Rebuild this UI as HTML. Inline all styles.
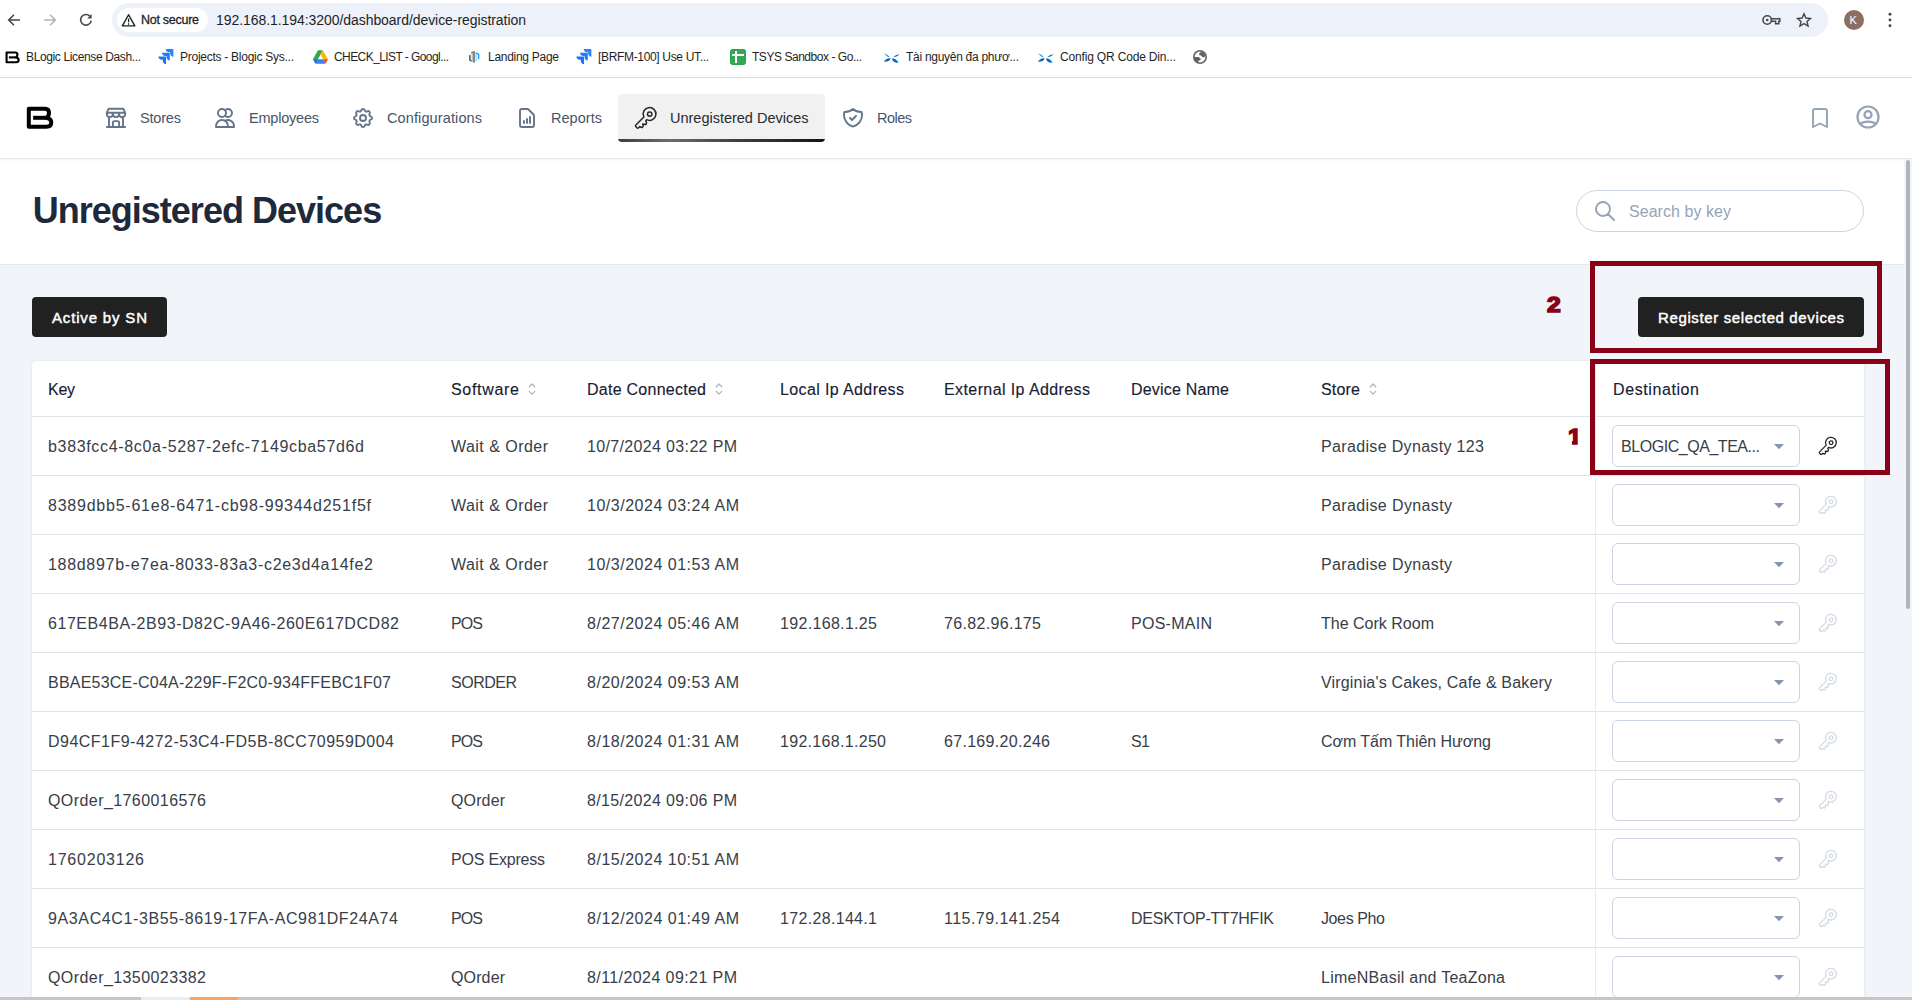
<!DOCTYPE html>
<html lang="en"><head><meta charset="utf-8"><title>Unregistered Devices</title>
<style>
*{box-sizing:border-box;margin:0;padding:0}
html,body{width:1912px;height:1000px;overflow:hidden;background:#fff}
body{position:relative;font-family:"Liberation Sans",sans-serif}
.t{position:absolute;white-space:nowrap;display:block}
.a{position:absolute;display:block}
svg{position:absolute;overflow:visible}
.hi{fill:none;stroke:#64748b;stroke-width:1.9;stroke-linecap:round;stroke-linejoin:round}
</style></head><body>

<!-- ===== browser chrome ===== -->
<div class="a" style="left:112px;top:3px;width:1716px;height:34px;border-radius:17px;background:#edf1fa"></div>
<div class="a" style="left:117px;top:8px;width:91px;height:24px;border-radius:12px;background:#fff"></div>
<!-- back -->
<svg style="left:6px;top:12px" width="16" height="16" viewBox="0 0 16 16"><path d="M14 8H3M8 2.7L2.7 8 8 13.3" fill="none" stroke="#474747" stroke-width="1.6"/></svg>
<!-- forward -->
<svg style="left:42px;top:12px" width="16" height="16" viewBox="0 0 16 16"><path d="M2 8h11M8 2.7L13.3 8 8 13.3" fill="none" stroke="#b4b4b4" stroke-width="1.6"/></svg>
<!-- reload -->
<svg style="left:78px;top:12px" width="16" height="16" viewBox="0 0 16 16"><path d="M13.2 8.6A5.3 5.3 0 1 1 11.9 4.3" fill="none" stroke="#474747" stroke-width="1.6"/><path d="M13.6 2v4.4H9.2z" fill="#474747"/></svg>
<!-- warning -->
<svg style="left:121.400px;top:12.700px" width="15.200" height="14" viewBox="0 0 14 13"><path d="M7 1.6L12.8 12H1.2z" fill="none" stroke="#1f1f1f" stroke-width="1.3" stroke-linejoin="round"/><path d="M7 5.2v3.4M7 9.6v1.2" stroke="#1f1f1f" stroke-width="1.2"/></svg>
<!-- password key -->
<svg style="left:1762px;top:14px" width="20" height="12" viewBox="0 0 20 12"><circle cx="5.2" cy="6" r="4.2" fill="none" stroke="#474747" stroke-width="1.6"/><circle cx="5.2" cy="6" r="1.3" fill="#474747"/><path d="M9.4 4.8h8.4v2.4h-1v2.6h-3.2V7.2H9.4" fill="none" stroke="#474747" stroke-width="1.5"/></svg>
<!-- star -->
<svg style="left:1795px;top:11px" width="18" height="18" viewBox="0 0 24 24"><path d="M12 3.6l2.5 5.7 6.2.6-4.7 4.1 1.4 6.1L12 16.9 6.6 20.1 8 14 3.3 9.9l6.2-.6z" fill="none" stroke="#474747" stroke-width="1.9" stroke-linejoin="miter"/></svg>
<!-- avatar -->
<div class="a" style="left:1844px;top:10px;width:20px;height:20px;border-radius:10px;background:#8d6e63"></div>
<!-- kebab -->
<svg style="left:1887px;top:12px" width="6" height="16" viewBox="0 0 6 16"><circle cx="3" cy="2.3" r="1.45" fill="#474747"/><circle cx="3" cy="8" r="1.45" fill="#474747"/><circle cx="3" cy="13.7" r="1.45" fill="#474747"/></svg>

<!-- bookmark favicons -->
<svg style="left:3.900px;top:49.550px" width="17.150" height="15" viewBox="0 0 32 28"><path d="M4.800 4.700H21C24 4.700 25 6.500 25 8.700C25 11 24 12.800 22.300 13.800C25.500 14.400 27.300 16 27.300 18.600C27.300 21.300 25.500 22.800 22.500 22.800H4.800z" fill="none" stroke="#000" stroke-width="4" stroke-linejoin="round"/><path d="M9.100 13.800H22.300" fill="none" stroke="#000" stroke-width="4"/></svg>
<svg style="left:157.4px;top:48.400px" width="17" height="17" viewBox="0 0 16 16"><path d="M15 1H8.200c0 1.700 1.300 3 3 3h1.200v1.200c0 1.700 1.300 3 3 3V1.400c0-.2-.2-.4-.4-.4z" fill="#2684ff"/><path d="M11.400 4.500H4.700c0 1.700 1.300 3 3 3H9v1.300c0 1.600 1.300 3 3 3V5c0-.3-.3-.5-.6-.5z" fill="#1f7bf8"/><path d="M8 8H1.300c0 1.700 1.300 3 3 3h1.200v1.200c0 1.700 1.300 3 3 3V8.500c0-.3-.2-.5-.5-.5z" fill="#1b76f5"/></svg>
<svg style="left:575.4px;top:48.400px" width="17" height="17" viewBox="0 0 16 16"><path d="M15 1H8.200c0 1.700 1.300 3 3 3h1.200v1.200c0 1.700 1.300 3 3 3V1.400c0-.2-.2-.4-.4-.4z" fill="#2684ff"/><path d="M11.400 4.500H4.700c0 1.700 1.300 3 3 3H9v1.300c0 1.600 1.300 3 3 3V5c0-.3-.3-.5-.6-.5z" fill="#1f7bf8"/><path d="M8 8H1.300c0 1.700 1.300 3 3 3h1.200v1.200c0 1.700 1.300 3 3 3V8.500c0-.3-.2-.5-.5-.5z" fill="#1b76f5"/></svg>
<!-- drive -->
<svg style="left:312.500px;top:50px" width="15" height="14" viewBox="0 0 14.800 13.500"><path d="M4.900 0H9.700L7.400 4.400 5 8.900H0z" fill="#2da94f"/><path d="M9.700 0L14.800 8.900H10L7.400 4.400z" fill="#fdb900"/><path d="M0 8.900H10L12.400 13.500H2.500z" fill="#3b82f6"/><path d="M10 8.900H14.800L12.400 13.500z" fill="#ea4335"/><path d="M0 8.900H4.900L2.500 13.500z" fill="#1a73e8"/></svg>
<!-- landing -->
<svg style="left:467px;top:50px" width="14" height="14" viewBox="0 0 14 14"><path d="M2.900 5.500V10L4.900 11M4.600 3L6.400 2" fill="none" stroke="#2f3e4e" stroke-width="1.300" stroke-linecap="round"/><rect x="4.600" y="2.600" width="1.400" height="9" fill="#c3c9cf"/><rect x="5.900" y="1" width="2.100" height="11.700" rx=".6" fill="#85888d"/><rect x="8.300" y="2.500" width="1.600" height="9" rx=".6" fill="#a9dcfa"/><path d="M9.300 3L11.600 4.400V8.800" fill="none" stroke="#1c9bef" stroke-width="1.400" stroke-linecap="round"/></svg>
<!-- sheets-like green -->
<div class="a" style="left:730px;top:49px;width:16px;height:16px;border-radius:2.500px;background:#34a853;border:1px solid #22a44a"></div>
<div class="a" style="left:735px;top:51px;width:2px;height:12px;background:#fff"></div>
<div class="a" style="left:732px;top:54px;width:12px;height:2px;background:#fff"></div>
<!-- birds -->
<svg style="left:882px;top:50px" width="20" height="16" viewBox="0 0 20 16"><path d="M2 3.600Q5.200 3.800 7.800 7.200Q4 6.600 2 3.600z" fill="#27bdee"/><path d="M4.500 5.200Q6.500 5.600 7.800 7.200Q5.800 7 4.500 5.200z" fill="#2a6db5"/><path d="M17.300 4.300Q13.800 4.300 11.300 7.200Q15.600 7 17.300 4.300z" fill="#1a78c8"/><path d="M8.800 8.400Q4.800 7.200 2.100 11.300Q6.800 12.300 8.800 8.400z" fill="#0b58ae"/><path d="M9.800 8.500Q13.800 7.800 16.100 12.900Q10.800 12.600 9.800 8.500z" fill="#0c62bb"/><path d="M2.100 11.300Q4 10.800 5 9.500" stroke="#1da1ea" stroke-width="1" fill="none"/><path d="M16.100 12.900Q15.700 11 14.300 9.800" stroke="#21b4f3" stroke-width="1" fill="none"/></svg>
<svg style="left:1036px;top:50px" width="20" height="16" viewBox="0 0 20 16"><path d="M2 3.600Q5.200 3.800 7.800 7.200Q4 6.600 2 3.600z" fill="#27bdee"/><path d="M4.500 5.200Q6.500 5.600 7.800 7.200Q5.800 7 4.500 5.200z" fill="#2a6db5"/><path d="M17.300 4.300Q13.800 4.300 11.300 7.200Q15.600 7 17.300 4.300z" fill="#1a78c8"/><path d="M8.800 8.400Q4.800 7.200 2.100 11.300Q6.800 12.300 8.800 8.400z" fill="#0b58ae"/><path d="M9.800 8.500Q13.800 7.800 16.100 12.900Q10.800 12.600 9.800 8.500z" fill="#0c62bb"/><path d="M2.100 11.300Q4 10.800 5 9.500" stroke="#1da1ea" stroke-width="1" fill="none"/><path d="M16.100 12.900Q15.700 11 14.300 9.800" stroke="#21b4f3" stroke-width="1" fill="none"/></svg>
<!-- globe -->
<svg style="left:1193px;top:50px" width="14" height="14" viewBox="0 0 14 14"><circle cx="7" cy="7" r="6.200" fill="none" stroke="#5f6368" stroke-width="1.600"/><path d="M8.500 1.500L6.200 3.300V5L8 5.500 9.500 7.300H11.200L12.400 5.800A6 6 0 0 0 8.500 1.500z" fill="#5f6368"/><path d="M1.200 7H5.500L7.600 8.500V10L5.700 10.600 5.200 12.800A6.200 6.200 0 0 1 1.200 7z" fill="#5f6368"/></svg>

<div class="a" style="left:0;top:77px;width:1912px;height:1px;background:#dadce0"></div>

<!-- ===== app nav ===== -->
<div class="a" style="left:0;top:158px;width:1912px;height:1px;background:#e6e6e7"></div>
<div class="a" style="left:0;top:159px;width:1904px;height:3px;background:linear-gradient(rgba(0,0,0,.035),rgba(0,0,0,0))"></div>
<!-- logo -->
<svg style="left:24px;top:104px" width="32" height="28" viewBox="0 0 32 28"><path d="M4.800 4.700H21C24 4.700 25 6.500 25 8.700C25 11 24 12.800 22.300 13.800C25.500 14.400 27.300 16 27.300 18.600C27.300 21.300 25.500 22.800 22.500 22.800H4.800z" fill="none" stroke="#000" stroke-width="4" stroke-linejoin="round"/><path d="M9.100 13.800H22.300" fill="none" stroke="#000" stroke-width="4"/></svg>
<!-- active tab -->
<div class="a" style="left:618px;top:134px;width:206.500px;height:8px;border-radius:0 0 4px 4px;background:linear-gradient(90deg,#3e3e3e 0%,#6c6c6c 25%,#3c3c3c 60%,#141414 100%)"></div>
<div class="a" style="left:618px;top:94px;width:206.500px;height:45px;border-radius:4px 4px 0 0;background:#f1f1f1"></div>
<!-- stores -->
<svg style="left:104px;top:106px" width="24" height="24" viewBox="0 0 24 24" class="hi"><path d="M2.900 21H21.100M5 11.400V21M19 11.400V21M8.900 21V16.600a1.500 1.500 0 0 1 1.500-1.500h3.200a1.500 1.500 0 0 1 1.500 1.500V21M4.600 2.800H19.400L21.200 6.700H2.800zM2.800 6.700v1.400a3.050 3.050 0 0 0 6.100 0V6.700M8.900 8.100a3.050 3.050 0 0 0 6.100 0V6.700M15 8.100a3.100 3.100 0 0 0 6.200 0V6.700"/></svg>
<!-- users -->
<svg style="left:213px;top:106px" width="24" height="24" viewBox="0 0 24 24" class="hi"><path d="M12 4.354a4 4 0 110 5.292M15 21H3v-1a6 6 0 0112 0v1zm0 0h6v-1a6 6 0 00-9-5.197M13 7a4 4 0 11-8 0 4 4 0 018 0z"/></svg>
<!-- cog -->
<svg style="left:351px;top:106px" width="24" height="24" viewBox="0 0 24 24" class="hi"><path d="M10.325 4.317c.426-1.756 2.924-1.756 3.350 0a1.724 1.724 0 002.573 1.066c1.543-.940 3.310.826 2.370 2.370a1.724 1.724 0 001.065 2.572c1.756.426 1.756 2.924 0 3.350a1.724 1.724 0 00-1.066 2.573c.940 1.543-.826 3.310-2.370 2.370a1.724 1.724 0 00-2.572 1.065c-.426 1.756-2.924 1.756-3.350 0a1.724 1.724 0 00-2.573-1.066c-1.543.940-3.310-.826-2.370-2.370a1.724 1.724 0 00-1.065-2.572c-1.756-.426-1.756-2.924 0-3.350a1.724 1.724 0 001.066-2.573c-.940-1.543.826-3.310 2.370-2.370.996.608 2.296.070 2.572-1.065z"/><path d="M15 12a3 3 0 11-6 0 3 3 0 016 0z"/></svg>
<!-- report -->
<svg style="left:515px;top:106px" width="24" height="24" viewBox="0 0 24 24" class="hi"><path d="M9 17v-2m3 2v-4m3 4v-6m2 10H7a2 2 0 01-2-2V5a2 2 0 012-2h5.586a1 1 0 01.707.293l5.414 5.414a1 1 0 01.293.707V19a2 2 0 01-2 2z"/></svg>
<!-- key (active) -->
<svg style="left:634px;top:106px" width="24" height="24" viewBox="0 0 24 24" class="hi" id="navkey"><g stroke="#262626" stroke-width="1.5"><path d="M9.900 11A6.400 6.400 0 1 1 12.700 13.700L11.700 14.900 12.600 16.500 12 18.400 8.700 18.100 9.400 19.700 8.200 21.600 6.900 21.300 5.900 20.600 4.400 22Q3.500 22.600 2.700 21.600L1.600 20.300Q1.300 19.600 1.900 19z"/><circle cx="15.700" cy="8.100" r="2.200"/></g></svg>
<!-- shield -->
<svg style="left:841px;top:106px" width="24" height="24" viewBox="0 0 24 24" class="hi"><path d="M9 12l2 2 4-4m5.618-4.016A11.955 11.955 0 0112 2.944a11.955 11.955 0 01-8.618 3.040A12.020 12.020 0 003 9c0 5.591 3.824 10.290 9 11.622 5.176-1.332 9-6.030 9-11.622 0-1.042-.133-2.052-.382-3.016z"/></svg>
<!-- bookmark -->
<svg style="left:1808px;top:106px" width="24" height="24" viewBox="0 0 24 24" class="hi"><path stroke="#94a3b8" d="M5 5a2 2 0 012-2h10a2 2 0 012 2v16l-7-3.500L5 21V5z"/></svg>
<!-- user circle -->
<svg style="left:1853.800px;top:102.800px" width="28" height="28" viewBox="0 0 24 24" class="hi"><path stroke="#94a3b8" d="M5.121 17.804A13.937 13.937 0 0112 16c2.500 0 4.847.655 6.879 1.804M15 10a3 3 0 11-6 0 3 3 0 016 0zm6 2a9 9 0 11-18 0 9 9 0 0118 0z"/></svg>

<!-- ===== page header ===== -->
<div class="a" style="left:0;top:264px;width:1904px;height:1px;background:#e2e8f0"></div>
<div class="a" style="left:1576px;top:190px;width:288px;height:42px;border-radius:21px;border:1px solid #cbd5e1;background:#fff"></div>
<svg style="left:1593px;top:199px" width="24" height="24" viewBox="0 0 24 24" class="hi"><path stroke="#94a3b8" d="M21 21l-6-6m2-5a7 7 0 11-14 0 7 7 0 0114 0z"/></svg>

<!-- ===== content ===== -->
<div class="a" style="left:0;top:265px;width:1904px;height:732px;background:#f1f5f9"></div>
<div class="a" style="left:32px;top:297px;width:135px;height:40px;border-radius:4px;background:#212121"></div>
<div class="a" style="left:1638px;top:297px;width:226px;height:40px;border-radius:4px;background:#212121"></div>

<!-- table card -->
<div class="a" style="left:32px;top:361px;width:1832px;height:640px;border-radius:4px 4px 0 0;background:#fff;box-shadow:0 0 3px rgba(15,23,42,.09)"></div>
<div class="a" style="left:32px;top:416px;width:1832px;height:1px;background:#e1e5eb"></div>
<div class="a" style="left:32px;top:475px;width:1832px;height:1px;background:#e1e5eb"></div>
<div class="a" style="left:32px;top:534px;width:1832px;height:1px;background:#e1e5eb"></div>
<div class="a" style="left:32px;top:593px;width:1832px;height:1px;background:#e1e5eb"></div>
<div class="a" style="left:32px;top:652px;width:1832px;height:1px;background:#e1e5eb"></div>
<div class="a" style="left:32px;top:711px;width:1832px;height:1px;background:#e1e5eb"></div>
<div class="a" style="left:32px;top:770px;width:1832px;height:1px;background:#e1e5eb"></div>
<div class="a" style="left:32px;top:829px;width:1832px;height:1px;background:#e1e5eb"></div>
<div class="a" style="left:32px;top:888px;width:1832px;height:1px;background:#e1e5eb"></div>
<div class="a" style="left:32px;top:947px;width:1832px;height:1px;background:#e1e5eb"></div>
<div class="a" style="left:1595px;top:361px;width:1px;height:636px;background:#e8ecf2"></div>
<svg style="left:528px;top:383px" width="8" height="13" viewBox="0 0 8 13"><path d="M1.300 3.700L4 1l2.700 2.700M1.300 8.400L4 11.100l2.700-2.700" fill="none" stroke="#a9b3c4" stroke-width="1.300" stroke-linecap="round" stroke-linejoin="round"/></svg>
<svg style="left:715px;top:383px" width="8" height="13" viewBox="0 0 8 13"><path d="M1.300 3.700L4 1l2.700 2.700M1.300 8.400L4 11.100l2.700-2.700" fill="none" stroke="#a9b3c4" stroke-width="1.300" stroke-linecap="round" stroke-linejoin="round"/></svg>
<svg style="left:1369px;top:383px" width="8" height="13" viewBox="0 0 8 13"><path d="M1.300 3.700L4 1l2.700 2.700M1.300 8.400L4 11.100l2.700-2.700" fill="none" stroke="#a9b3c4" stroke-width="1.300" stroke-linecap="round" stroke-linejoin="round"/></svg>
<div class="a" style="left:1612px;top:425px;width:188px;height:42px;border-radius:6px;border:1px solid #cbd5e1;background:#fff"></div>
<svg style="left:1774px;top:443.7px" width="10" height="5.300" viewBox="0 0 10 5.300"><path d="M0 0h10L5 5.300z" fill="#8794ad"/></svg>
<svg style="left:1818px;top:436px" width="20" height="20" viewBox="0 0 24 24" fill="none" stroke="#262626" stroke-width="1.550" stroke-linecap="round" stroke-linejoin="round"><path d="M9.900 11A6.400 6.400 0 1 1 12.700 13.700L11.700 14.900 12.600 16.500 12 18.400 8.700 18.100 9.400 19.700 8.200 21.600 6.900 21.300 5.900 20.600 4.400 22Q3.500 22.600 2.700 21.600L1.600 20.300Q1.300 19.600 1.900 19z"/><circle cx="15.700" cy="8.100" r="2.200"/></svg>
<div class="a" style="left:1612px;top:484px;width:188px;height:42px;border-radius:6px;border:1px solid #cbd5e1;background:#fff"></div>
<svg style="left:1774px;top:502.7px" width="10" height="5.300" viewBox="0 0 10 5.300"><path d="M0 0h10L5 5.300z" fill="#8794ad"/></svg>
<svg style="left:1818px;top:495px" width="20" height="20" viewBox="0 0 24 24" fill="none" stroke="#d3dae4" stroke-width="1.550" stroke-linecap="round" stroke-linejoin="round"><path d="M9.900 11A6.400 6.400 0 1 1 12.700 13.700L11.700 14.900 12.600 16.500 12 18.400 8.700 18.100 9.400 19.700 8.200 21.600 6.900 21.300 5.900 20.600 4.400 22Q3.500 22.600 2.700 21.600L1.600 20.300Q1.300 19.600 1.900 19z"/><circle cx="15.700" cy="8.100" r="2.200"/></svg>
<div class="a" style="left:1612px;top:543px;width:188px;height:42px;border-radius:6px;border:1px solid #cbd5e1;background:#fff"></div>
<svg style="left:1774px;top:561.7px" width="10" height="5.300" viewBox="0 0 10 5.300"><path d="M0 0h10L5 5.300z" fill="#8794ad"/></svg>
<svg style="left:1818px;top:554px" width="20" height="20" viewBox="0 0 24 24" fill="none" stroke="#d3dae4" stroke-width="1.550" stroke-linecap="round" stroke-linejoin="round"><path d="M9.900 11A6.400 6.400 0 1 1 12.700 13.700L11.700 14.900 12.600 16.500 12 18.400 8.700 18.100 9.400 19.700 8.200 21.600 6.900 21.300 5.900 20.600 4.400 22Q3.500 22.600 2.700 21.600L1.600 20.300Q1.300 19.600 1.900 19z"/><circle cx="15.700" cy="8.100" r="2.200"/></svg>
<div class="a" style="left:1612px;top:602px;width:188px;height:42px;border-radius:6px;border:1px solid #cbd5e1;background:#fff"></div>
<svg style="left:1774px;top:620.7px" width="10" height="5.300" viewBox="0 0 10 5.300"><path d="M0 0h10L5 5.300z" fill="#8794ad"/></svg>
<svg style="left:1818px;top:613px" width="20" height="20" viewBox="0 0 24 24" fill="none" stroke="#d3dae4" stroke-width="1.550" stroke-linecap="round" stroke-linejoin="round"><path d="M9.900 11A6.400 6.400 0 1 1 12.700 13.700L11.700 14.900 12.600 16.500 12 18.400 8.700 18.100 9.400 19.700 8.200 21.600 6.900 21.300 5.900 20.600 4.400 22Q3.500 22.600 2.700 21.600L1.600 20.300Q1.300 19.600 1.900 19z"/><circle cx="15.700" cy="8.100" r="2.200"/></svg>
<div class="a" style="left:1612px;top:661px;width:188px;height:42px;border-radius:6px;border:1px solid #cbd5e1;background:#fff"></div>
<svg style="left:1774px;top:679.7px" width="10" height="5.300" viewBox="0 0 10 5.300"><path d="M0 0h10L5 5.300z" fill="#8794ad"/></svg>
<svg style="left:1818px;top:672px" width="20" height="20" viewBox="0 0 24 24" fill="none" stroke="#d3dae4" stroke-width="1.550" stroke-linecap="round" stroke-linejoin="round"><path d="M9.900 11A6.400 6.400 0 1 1 12.700 13.700L11.700 14.900 12.600 16.500 12 18.400 8.700 18.100 9.400 19.700 8.200 21.600 6.900 21.300 5.900 20.600 4.400 22Q3.500 22.600 2.700 21.600L1.600 20.300Q1.300 19.600 1.900 19z"/><circle cx="15.700" cy="8.100" r="2.200"/></svg>
<div class="a" style="left:1612px;top:720px;width:188px;height:42px;border-radius:6px;border:1px solid #cbd5e1;background:#fff"></div>
<svg style="left:1774px;top:738.7px" width="10" height="5.300" viewBox="0 0 10 5.300"><path d="M0 0h10L5 5.300z" fill="#8794ad"/></svg>
<svg style="left:1818px;top:731px" width="20" height="20" viewBox="0 0 24 24" fill="none" stroke="#d3dae4" stroke-width="1.550" stroke-linecap="round" stroke-linejoin="round"><path d="M9.900 11A6.400 6.400 0 1 1 12.700 13.700L11.700 14.900 12.600 16.500 12 18.400 8.700 18.100 9.400 19.700 8.200 21.600 6.900 21.300 5.900 20.600 4.400 22Q3.500 22.600 2.700 21.600L1.600 20.300Q1.300 19.600 1.900 19z"/><circle cx="15.700" cy="8.100" r="2.200"/></svg>
<div class="a" style="left:1612px;top:779px;width:188px;height:42px;border-radius:6px;border:1px solid #cbd5e1;background:#fff"></div>
<svg style="left:1774px;top:797.7px" width="10" height="5.300" viewBox="0 0 10 5.300"><path d="M0 0h10L5 5.300z" fill="#8794ad"/></svg>
<svg style="left:1818px;top:790px" width="20" height="20" viewBox="0 0 24 24" fill="none" stroke="#d3dae4" stroke-width="1.550" stroke-linecap="round" stroke-linejoin="round"><path d="M9.900 11A6.400 6.400 0 1 1 12.700 13.700L11.700 14.900 12.600 16.500 12 18.400 8.700 18.100 9.400 19.700 8.200 21.600 6.900 21.300 5.900 20.600 4.400 22Q3.500 22.600 2.700 21.600L1.600 20.300Q1.300 19.600 1.900 19z"/><circle cx="15.700" cy="8.100" r="2.200"/></svg>
<div class="a" style="left:1612px;top:838px;width:188px;height:42px;border-radius:6px;border:1px solid #cbd5e1;background:#fff"></div>
<svg style="left:1774px;top:856.7px" width="10" height="5.300" viewBox="0 0 10 5.300"><path d="M0 0h10L5 5.300z" fill="#8794ad"/></svg>
<svg style="left:1818px;top:849px" width="20" height="20" viewBox="0 0 24 24" fill="none" stroke="#d3dae4" stroke-width="1.550" stroke-linecap="round" stroke-linejoin="round"><path d="M9.900 11A6.400 6.400 0 1 1 12.700 13.700L11.700 14.900 12.600 16.500 12 18.400 8.700 18.100 9.400 19.700 8.200 21.600 6.900 21.300 5.900 20.600 4.400 22Q3.500 22.600 2.700 21.600L1.600 20.300Q1.300 19.600 1.900 19z"/><circle cx="15.700" cy="8.100" r="2.200"/></svg>
<div class="a" style="left:1612px;top:897px;width:188px;height:42px;border-radius:6px;border:1px solid #cbd5e1;background:#fff"></div>
<svg style="left:1774px;top:915.7px" width="10" height="5.300" viewBox="0 0 10 5.300"><path d="M0 0h10L5 5.300z" fill="#8794ad"/></svg>
<svg style="left:1818px;top:908px" width="20" height="20" viewBox="0 0 24 24" fill="none" stroke="#d3dae4" stroke-width="1.550" stroke-linecap="round" stroke-linejoin="round"><path d="M9.900 11A6.400 6.400 0 1 1 12.700 13.700L11.700 14.900 12.600 16.500 12 18.400 8.700 18.100 9.400 19.700 8.200 21.600 6.900 21.300 5.900 20.600 4.400 22Q3.500 22.600 2.700 21.600L1.600 20.300Q1.300 19.600 1.900 19z"/><circle cx="15.700" cy="8.100" r="2.200"/></svg>
<div class="a" style="left:1612px;top:956px;width:188px;height:42px;border-radius:6px;border:1px solid #cbd5e1;background:#fff"></div>
<svg style="left:1774px;top:974.7px" width="10" height="5.300" viewBox="0 0 10 5.300"><path d="M0 0h10L5 5.300z" fill="#8794ad"/></svg>
<svg style="left:1818px;top:967px" width="20" height="20" viewBox="0 0 24 24" fill="none" stroke="#d3dae4" stroke-width="1.550" stroke-linecap="round" stroke-linejoin="round"><path d="M9.900 11A6.400 6.400 0 1 1 12.700 13.700L11.700 14.900 12.600 16.500 12 18.400 8.700 18.100 9.400 19.700 8.200 21.600 6.900 21.300 5.900 20.600 4.400 22Q3.500 22.600 2.700 21.600L1.600 20.300Q1.300 19.600 1.900 19z"/><circle cx="15.700" cy="8.100" r="2.200"/></svg>

<!-- scrollbar -->
<div class="a" style="left:1904px;top:159px;width:8px;height:838px;background:#f1f5f9"></div>
<div class="a" style="left:1906px;top:160px;width:4px;height:449px;border-radius:2px;background:#b1b5b9"></div>

<!-- red boxes -->
<div class="a" style="left:1590px;top:261px;width:292px;height:92px;border:5px solid #8a0016"></div>
<div class="a" style="left:1590px;top:359px;width:300px;height:116px;border:5px solid #8a0016"></div>

<!-- bottom strip -->
<div class="a" style="left:0;top:997px;width:1912px;height:3px;background:#c6c6c6"></div>
<div class="a" style="left:141px;top:997px;width:49px;height:3px;background:#ececec"></div>
<div class="a" style="left:190px;top:997px;width:48px;height:3px;background:#f4a66a"></div>

<header aria-label="browser-chrome">
<span id="t0" class="t" style="left:141px;top:11.0px;height:18px;line-height:18px;font-size:12.5px;font-weight:400;color:#1f1f1f;letter-spacing:-0.273px;-webkit-text-stroke:0.3px #1f1f1f;">Not secure</span>
<span id="t1" class="t" style="left:216px;top:10.0px;height:20px;line-height:20px;font-size:14px;font-weight:400;color:#1f1f1f;letter-spacing:-0.062px;">192.168.1.194:3200/dashboard/device-registration</span>
<span id="t2" class="t" style="left:26px;top:48.5px;height:17px;line-height:17px;font-size:12px;font-weight:400;color:#1f1f1f;letter-spacing:-0.369px;">BLogic License Dash...</span>
<span id="t3" class="t" style="left:180px;top:48.5px;height:17px;line-height:17px;font-size:12px;font-weight:400;color:#1f1f1f;letter-spacing:-0.263px;">Projects - Blogic Sys...</span>
<span id="t4" class="t" style="left:334px;top:48.5px;height:17px;line-height:17px;font-size:12px;font-weight:400;color:#1f1f1f;letter-spacing:-0.575px;">CHECK_LIST - Googl...</span>
<span id="t5" class="t" style="left:488px;top:48.5px;height:17px;line-height:17px;font-size:12px;font-weight:400;color:#1f1f1f;letter-spacing:-0.28px;">Landing Page</span>
<span id="t6" class="t" style="left:598px;top:48.5px;height:17px;line-height:17px;font-size:12px;font-weight:400;color:#1f1f1f;letter-spacing:-0.335px;">[BRFM-100] Use UT...</span>
<span id="t7" class="t" style="left:752px;top:48.5px;height:17px;line-height:17px;font-size:12px;font-weight:400;color:#1f1f1f;letter-spacing:-0.46px;">TSYS Sandbox - Go...</span>
<span id="t8" class="t" style="left:906px;top:48.5px;height:17px;line-height:17px;font-size:12px;font-weight:400;color:#1f1f1f;letter-spacing:-0.282px;">Tài nguyên đa phươ...</span>
<span id="t9" class="t" style="left:1060px;top:48.5px;height:17px;line-height:17px;font-size:12px;font-weight:400;color:#1f1f1f;letter-spacing:-0.17px;">Config QR Code Din...</span>
<span id="t10" class="t" style="left:1849.5px;top:12.5px;height:15px;line-height:15px;font-size:11px;font-weight:400;color:#ffffff;letter-spacing:0px;">K</span>
</header>
<nav aria-label="app-navigation">
<span id="t11" class="t" style="left:140px;top:108.0px;height:20px;line-height:20px;font-size:14.5px;font-weight:400;color:#475569;letter-spacing:-0.184px;">Stores</span>
<span id="t12" class="t" style="left:249px;top:108.0px;height:20px;line-height:20px;font-size:14.5px;font-weight:400;color:#475569;letter-spacing:-0.217px;">Employees</span>
<span id="t13" class="t" style="left:387px;top:108.0px;height:20px;line-height:20px;font-size:14.5px;font-weight:400;color:#475569;letter-spacing:0.115px;">Configurations</span>
<span id="t14" class="t" style="left:551px;top:108.0px;height:20px;line-height:20px;font-size:14.5px;font-weight:400;color:#475569;letter-spacing:0.036px;">Reports</span>
<span id="t15" class="t" style="left:670px;top:108.0px;height:20px;line-height:20px;font-size:14.5px;font-weight:400;color:#272b33;letter-spacing:-0.007px;">Unregistered Devices</span>
<span id="t16" class="t" style="left:877px;top:108.0px;height:20px;line-height:20px;font-size:14.5px;font-weight:400;color:#475569;letter-spacing:-0.52px;">Roles</span>
</nav>
<header aria-label="page-header">
<span id="t17" class="t" style="left:32.7px;top:186.0px;height:50px;line-height:50px;font-size:36px;font-weight:700;color:#1e293b;letter-spacing:-0.984px;">Unregistered Devices</span>
<span id="t18" class="t" style="left:1629px;top:201.0px;height:22px;line-height:22px;font-size:16px;font-weight:400;color:#94a3b8;letter-spacing:0.051px;">Search by key</span>
</header>
<section aria-label="toolbar">
<span id="t19" class="t" style="left:52px;top:306.5px;height:21px;line-height:21px;font-size:15px;font-weight:400;color:#ffffff;letter-spacing:0.83px;-webkit-text-stroke:0.45px #fff;">Active by SN</span>
<span id="t20" class="t" style="left:1658px;top:306.5px;height:21px;line-height:21px;font-size:15px;font-weight:400;color:#ffffff;letter-spacing:0.628px;-webkit-text-stroke:0.45px #fff;">Register selected devices</span>
<span id="t21" class="t" style="left:1547.4px;top:289.0px;height:31px;line-height:31px;font-size:22px;font-weight:700;color:#8a0016;letter-spacing:0px;-webkit-text-stroke:1.6px #8a0016;transform:scaleX(1.12);transform-origin:0 50%;">2</span>
<span id="t22" class="t" style="left:1568.4px;top:421.0px;height:31px;line-height:31px;font-size:22px;font-weight:700;color:#8a0016;letter-spacing:0px;-webkit-text-stroke:1.6px #8a0016;clip-path:polygon(-3px -3px,8.7px -3px,8.7px 34px,3.5px 34px,3.5px 19px,-3px 19px);transform:scaleX(1.12);transform-origin:0 50%;">1</span>
</section>
<section aria-label="table-head">
<span id="t23" class="t" style="left:48px;top:379.0px;height:22px;line-height:22px;font-size:16px;font-weight:400;color:#172033;letter-spacing:-0.289px;-webkit-text-stroke:0.13px #172033;">Key</span>
<span id="t24" class="t" style="left:451px;top:379.0px;height:22px;line-height:22px;font-size:16px;font-weight:400;color:#172033;letter-spacing:0.694px;-webkit-text-stroke:0.13px #172033;">Software</span>
<span id="t25" class="t" style="left:587px;top:379.0px;height:22px;line-height:22px;font-size:16px;font-weight:400;color:#172033;letter-spacing:0.258px;-webkit-text-stroke:0.13px #172033;">Date Connected</span>
<span id="t26" class="t" style="left:780px;top:379.0px;height:22px;line-height:22px;font-size:16px;font-weight:400;color:#172033;letter-spacing:0.38px;-webkit-text-stroke:0.13px #172033;">Local Ip Address</span>
<span id="t27" class="t" style="left:944px;top:379.0px;height:22px;line-height:22px;font-size:16px;font-weight:400;color:#172033;letter-spacing:0.403px;-webkit-text-stroke:0.13px #172033;">External Ip Address</span>
<span id="t28" class="t" style="left:1131px;top:379.0px;height:22px;line-height:22px;font-size:16px;font-weight:400;color:#172033;letter-spacing:0.197px;-webkit-text-stroke:0.13px #172033;">Device Name</span>
<span id="t29" class="t" style="left:1321px;top:379.0px;height:22px;line-height:22px;font-size:16px;font-weight:400;color:#172033;letter-spacing:0.188px;-webkit-text-stroke:0.13px #172033;">Store</span>
<span id="t30" class="t" style="left:1613px;top:379.0px;height:22px;line-height:22px;font-size:16px;font-weight:400;color:#172033;letter-spacing:0.595px;-webkit-text-stroke:0.13px #172033;">Destination</span>
</section>
<section aria-label="table-body">
<span id="t31" class="t" style="left:48px;top:436.0px;height:22px;line-height:22px;font-size:16px;font-weight:400;color:#383d47;letter-spacing:0.667px;">b383fcc4-8c0a-5287-2efc-7149cba57d6d</span>
<span id="t32" class="t" style="left:451px;top:436.0px;height:22px;line-height:22px;font-size:16px;font-weight:400;color:#383d47;letter-spacing:0.466px;">Wait &amp; Order</span>
<span id="t33" class="t" style="left:587px;top:436.0px;height:22px;line-height:22px;font-size:16px;font-weight:400;color:#383d47;letter-spacing:0.347px;">10/7/2024 03:22 PM</span>
<span id="t34" class="t" style="left:1321px;top:436.0px;height:22px;line-height:22px;font-size:16px;font-weight:400;color:#383d47;letter-spacing:0.34px;">Paradise Dynasty 123</span>
<span id="t35" class="t" style="left:48px;top:495.0px;height:22px;line-height:22px;font-size:16px;font-weight:400;color:#383d47;letter-spacing:0.764px;">8389dbb5-61e8-6471-cb98-99344d251f5f</span>
<span id="t36" class="t" style="left:451px;top:495.0px;height:22px;line-height:22px;font-size:16px;font-weight:400;color:#383d47;letter-spacing:0.466px;">Wait &amp; Order</span>
<span id="t37" class="t" style="left:587px;top:495.0px;height:22px;line-height:22px;font-size:16px;font-weight:400;color:#383d47;letter-spacing:0.516px;">10/3/2024 03:24 AM</span>
<span id="t38" class="t" style="left:1321px;top:495.0px;height:22px;line-height:22px;font-size:16px;font-weight:400;color:#383d47;letter-spacing:0.374px;">Paradise Dynasty</span>
<span id="t39" class="t" style="left:48px;top:554.0px;height:22px;line-height:22px;font-size:16px;font-weight:400;color:#383d47;letter-spacing:0.694px;">188d897b-e7ea-8033-83a3-c2e3d4a14fe2</span>
<span id="t40" class="t" style="left:451px;top:554.0px;height:22px;line-height:22px;font-size:16px;font-weight:400;color:#383d47;letter-spacing:0.466px;">Wait &amp; Order</span>
<span id="t41" class="t" style="left:587px;top:554.0px;height:22px;line-height:22px;font-size:16px;font-weight:400;color:#383d47;letter-spacing:0.516px;">10/3/2024 01:53 AM</span>
<span id="t42" class="t" style="left:1321px;top:554.0px;height:22px;line-height:22px;font-size:16px;font-weight:400;color:#383d47;letter-spacing:0.374px;">Paradise Dynasty</span>
<span id="t43" class="t" style="left:48px;top:613.0px;height:22px;line-height:22px;font-size:16px;font-weight:400;color:#383d47;letter-spacing:0.55px;">617EB4BA-2B93-D82C-9A46-260E617DCD82</span>
<span id="t44" class="t" style="left:451px;top:613.0px;height:22px;line-height:22px;font-size:16px;font-weight:400;color:#383d47;letter-spacing:-0.898px;">POS</span>
<span id="t45" class="t" style="left:587px;top:613.0px;height:22px;line-height:22px;font-size:16px;font-weight:400;color:#383d47;letter-spacing:0.516px;">8/27/2024 05:46 AM</span>
<span id="t46" class="t" style="left:780px;top:613.0px;height:22px;line-height:22px;font-size:16px;font-weight:400;color:#383d47;letter-spacing:0.325px;">192.168.1.25</span>
<span id="t47" class="t" style="left:944px;top:613.0px;height:22px;line-height:22px;font-size:16px;font-weight:400;color:#383d47;letter-spacing:0.325px;">76.82.96.175</span>
<span id="t48" class="t" style="left:1131px;top:613.0px;height:22px;line-height:22px;font-size:16px;font-weight:400;color:#383d47;letter-spacing:0.268px;">POS-MAIN</span>
<span id="t49" class="t" style="left:1321px;top:613.0px;height:22px;line-height:22px;font-size:16px;font-weight:400;color:#383d47;letter-spacing:0.007px;">The Cork Room</span>
<span id="t50" class="t" style="left:48px;top:672.0px;height:22px;line-height:22px;font-size:16px;font-weight:400;color:#383d47;letter-spacing:0.221px;">BBAE53CE-C04A-229F-F2C0-934FFEBC1F07</span>
<span id="t51" class="t" style="left:451px;top:672.0px;height:22px;line-height:22px;font-size:16px;font-weight:400;color:#383d47;letter-spacing:-0.491px;">SORDER</span>
<span id="t52" class="t" style="left:587px;top:672.0px;height:22px;line-height:22px;font-size:16px;font-weight:400;color:#383d47;letter-spacing:0.516px;">8/20/2024 09:53 AM</span>
<span id="t53" class="t" style="left:1321px;top:672.0px;height:22px;line-height:22px;font-size:16px;font-weight:400;color:#383d47;letter-spacing:0.168px;">Virginia's Cakes, Cafe &amp; Bakery</span>
<span id="t54" class="t" style="left:48px;top:731.0px;height:22px;line-height:22px;font-size:16px;font-weight:400;color:#383d47;letter-spacing:0.484px;">D94CF1F9-4272-53C4-FD5B-8CC70959D004</span>
<span id="t55" class="t" style="left:451px;top:731.0px;height:22px;line-height:22px;font-size:16px;font-weight:400;color:#383d47;letter-spacing:-0.898px;">POS</span>
<span id="t56" class="t" style="left:587px;top:731.0px;height:22px;line-height:22px;font-size:16px;font-weight:400;color:#383d47;letter-spacing:0.516px;">8/18/2024 01:31 AM</span>
<span id="t57" class="t" style="left:780px;top:731.0px;height:22px;line-height:22px;font-size:16px;font-weight:400;color:#383d47;letter-spacing:0.306px;">192.168.1.250</span>
<span id="t58" class="t" style="left:944px;top:731.0px;height:22px;line-height:22px;font-size:16px;font-weight:400;color:#383d47;letter-spacing:0.306px;">67.169.20.246</span>
<span id="t59" class="t" style="left:1131px;top:731.0px;height:22px;line-height:22px;font-size:16px;font-weight:400;color:#383d47;letter-spacing:-0.578px;">S1</span>
<span id="t60" class="t" style="left:1321px;top:731.0px;height:22px;line-height:22px;font-size:16px;font-weight:400;color:#383d47;letter-spacing:-0.04px;">Cơm Tấm Thiên Hương</span>
<span id="t61" class="t" style="left:48px;top:790.0px;height:22px;line-height:22px;font-size:16px;font-weight:400;color:#383d47;letter-spacing:0.423px;">QOrder_1760016576</span>
<span id="t62" class="t" style="left:451px;top:790.0px;height:22px;line-height:22px;font-size:16px;font-weight:400;color:#383d47;letter-spacing:0.131px;">QOrder</span>
<span id="t63" class="t" style="left:587px;top:790.0px;height:22px;line-height:22px;font-size:16px;font-weight:400;color:#383d47;letter-spacing:0.347px;">8/15/2024 09:06 PM</span>
<span id="t64" class="t" style="left:48px;top:849.0px;height:22px;line-height:22px;font-size:16px;font-weight:400;color:#383d47;letter-spacing:0.78px;">1760203126</span>
<span id="t65" class="t" style="left:451px;top:849.0px;height:22px;line-height:22px;font-size:16px;font-weight:400;color:#383d47;letter-spacing:-0.203px;">POS Express</span>
<span id="t66" class="t" style="left:587px;top:849.0px;height:22px;line-height:22px;font-size:16px;font-weight:400;color:#383d47;letter-spacing:0.516px;">8/15/2024 10:51 AM</span>
<span id="t67" class="t" style="left:48px;top:908.0px;height:22px;line-height:22px;font-size:16px;font-weight:400;color:#383d47;letter-spacing:0.623px;">9A3AC4C1-3B55-8619-17FA-AC981DF24A74</span>
<span id="t68" class="t" style="left:451px;top:908.0px;height:22px;line-height:22px;font-size:16px;font-weight:400;color:#383d47;letter-spacing:-0.898px;">POS</span>
<span id="t69" class="t" style="left:587px;top:908.0px;height:22px;line-height:22px;font-size:16px;font-weight:400;color:#383d47;letter-spacing:0.516px;">8/12/2024 01:49 AM</span>
<span id="t70" class="t" style="left:780px;top:908.0px;height:22px;line-height:22px;font-size:16px;font-weight:400;color:#383d47;letter-spacing:0.325px;">172.28.144.1</span>
<span id="t71" class="t" style="left:944px;top:908.0px;height:22px;line-height:22px;font-size:16px;font-weight:400;color:#383d47;letter-spacing:0.459px;">115.79.141.254</span>
<span id="t72" class="t" style="left:1131px;top:908.0px;height:22px;line-height:22px;font-size:16px;font-weight:400;color:#383d47;letter-spacing:-0.242px;">DESKTOP-TT7HFIK</span>
<span id="t73" class="t" style="left:1321px;top:908.0px;height:22px;line-height:22px;font-size:16px;font-weight:400;color:#383d47;letter-spacing:-0.388px;">Joes Pho</span>
<span id="t74" class="t" style="left:48px;top:967.0px;height:22px;line-height:22px;font-size:16px;font-weight:400;color:#383d47;letter-spacing:0.423px;">QOrder_1350023382</span>
<span id="t75" class="t" style="left:451px;top:967.0px;height:22px;line-height:22px;font-size:16px;font-weight:400;color:#383d47;letter-spacing:0.131px;">QOrder</span>
<span id="t76" class="t" style="left:587px;top:967.0px;height:22px;line-height:22px;font-size:16px;font-weight:400;color:#383d47;letter-spacing:0.416px;">8/11/2024 09:21 PM</span>
<span id="t77" class="t" style="left:1321px;top:967.0px;height:22px;line-height:22px;font-size:16px;font-weight:400;color:#383d47;letter-spacing:0.263px;">LimeNBasil and TeaZona</span>
<span id="t78" class="t" style="left:1621px;top:436.0px;height:22px;line-height:22px;font-size:16px;font-weight:400;color:#383d47;letter-spacing:-0.455px;">BLOGIC_QA_TEA...</span>
</section>
</body></html>
